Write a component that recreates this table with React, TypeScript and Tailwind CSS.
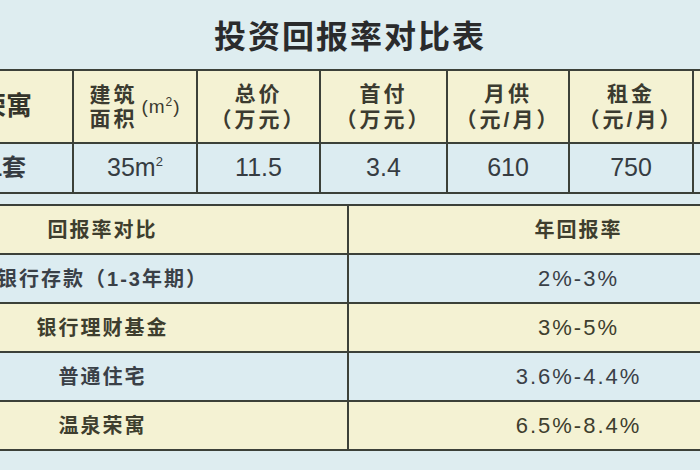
const font = { fontFamily: '"Liberation Sans", "Noto Sans CJK SC", sans-serif' };

const topWidths = ['w-[126px]', 'w-[124px]', 'w-[123px]', 'w-[127px]', 'w-[122px]', 'w-[124px]', 'w-[124px]'];

function HeadCell({ w, a, b }: { w: string; a: string; b: string }) {
  return (
    <div className={`${w} shrink-0 border-r-2 border-[#3c4139] flex flex-col items-center justify-center text-[21px] leading-[26px] tracking-[3px] font-bold text-[#3b3b30]`}>
      <span>{a}</span>
      <span>{b}</span>
    </div>
  );
}

function DataCell({ w, children }: { w: string; children: React.ReactNode }) {
  return (
    <div className={`${w} shrink-0 border-r-2 border-[#3c4139] flex items-center justify-center text-[25px] text-[#363c42]`}>
      {children}
    </div>
  );
}

const rows = [
  { name: '银行存款（1-3年期）', rate: '2%-3%', bg: 'bg-[#dcecf1]', color: 'text-[#3a4047]' },
  { name: '银行理财基金', rate: '3%-5%', bg: 'bg-[#f4f2d3]', color: 'text-[#3e3e2e]' },
  { name: '普通住宅', rate: '3.6%-4.4%', bg: 'bg-[#dcecf1]', color: 'text-[#3a4047]' },
  { name: '温泉荣寓', rate: '6.5%-8.4%', bg: 'bg-[#f4f2d3]', color: 'text-[#3e3e2e]' },
];

export default function App() {
  return (
    <div className="w-[700px] h-[470px] overflow-hidden bg-[#deedf0]" style={font}>
      <div className="h-[69px] flex items-center justify-center pt-[4px]">
        <h1 className="text-[32px] font-bold tracking-[2px] text-[#2a2b2c]">投资回报率对比表</h1>
      </div>

      {/* top table */}
      <div className="ml-[-52px] w-max border-y-2 border-[#3c4139]">
        <div className="flex h-[73px] bg-[#f4f2d3] border-b-2 border-[#3c4139]">
          <div className={`${topWidths[0]} shrink-0 border-r-2 border-[#3c4139] flex items-center justify-end pr-[40px] whitespace-nowrap text-[26px] font-bold text-[#34342a]`}>
            温泉荣寓
          </div>
          <div className={`${topWidths[1]} shrink-0 border-r-2 border-[#3c4139] flex items-center justify-center gap-[4px] text-[#3b3b30]`}>
            <div className="flex flex-col text-[21px] leading-[24px] tracking-[3px] font-bold">
              <span>建筑</span>
              <span>面积</span>
            </div>
            <span className="text-[19px] leading-none tracking-[1px]">
              (m<span className="relative top-[-7px] text-[12px]">2</span>)
            </span>
          </div>
          <HeadCell w={topWidths[2]} a="总价" b="（万元）" />
          <HeadCell w={topWidths[3]} a="首付" b="（万元）" />
          <HeadCell w={topWidths[4]} a="月供" b="（元/月）" />
          <HeadCell w={topWidths[5]} a="租金" b="（元/月）" />
          <HeadCell w={topWidths[6]} a="" b="" />
        </div>
        <div className="flex h-[48px] bg-[#dcecf1]">
          <div className={`${topWidths[0]} shrink-0 border-r-2 border-[#3c4139] flex items-center justify-end pr-[46px] whitespace-nowrap text-[24px] font-bold text-[#363c42]`}>
            1套
          </div>
          <DataCell w={topWidths[1]}>
            35m<sup className="text-[13px]">2</sup>
          </DataCell>
          <DataCell w={topWidths[2]}>11.5</DataCell>
          <DataCell w={topWidths[3]}>3.4</DataCell>
          <DataCell w={topWidths[4]}>610</DataCell>
          <DataCell w={topWidths[5]}>750</DataCell>
          <DataCell w={topWidths[6]}>{''}</DataCell>
        </div>
      </div>

      {/* bottom table */}
      <div className="mt-[10px] ml-[-142px] w-max border-t-2 border-[#3c4139]">
        <div className="flex h-[49px] bg-[#f4f2d3] border-b-2 border-[#3c4139] text-[20px] tracking-[2px] font-bold text-[#3e3e2e]">
          <div className="w-[491px] shrink-0 border-r-2 border-[#3c4139] flex items-center justify-center">回报率对比</div>
          <div className="w-[459px] shrink-0 flex items-center justify-center">年回报率</div>
        </div>
        {rows.map((r) => (
          <div key={r.name} className={`flex h-[49px] ${r.bg} ${r.color} border-b-2 border-[#3c4139]`}>
            <div className="w-[491px] shrink-0 border-r-2 border-[#3c4139] flex items-center justify-center whitespace-nowrap text-[20px] tracking-[2px] font-bold">
              {r.name}
            </div>
            <div className="w-[459px] shrink-0 flex items-center justify-center text-[22px] tracking-[2px]">
              {r.rate}
            </div>
          </div>
        ))}
      </div>
    </div>
  );
}
